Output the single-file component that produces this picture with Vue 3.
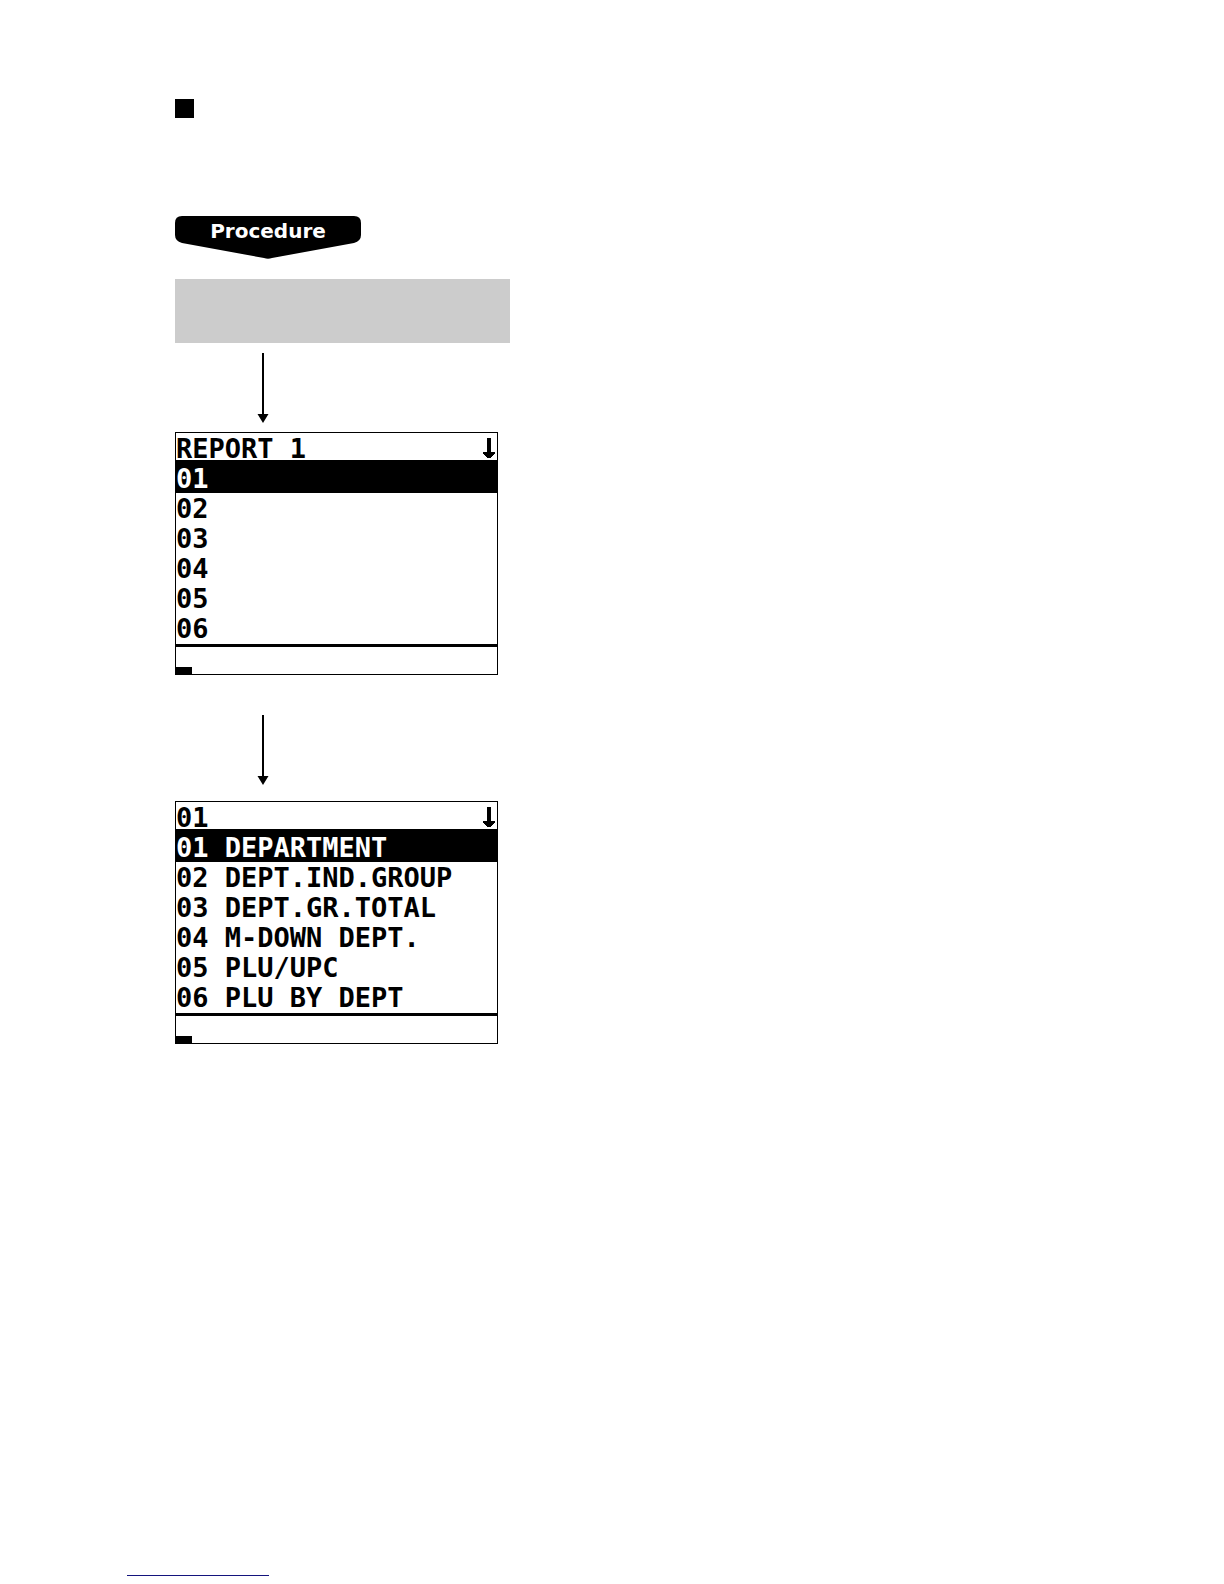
<template>
  <main class="page">
    <div class="marker"></div>

    <h2 class="procedure">
      <svg class="procedure-shape" viewBox="0 0 186 43" aria-hidden="true">
        <path d="M7 0H179Q186 0 186 7V19Q186 25 179 27L97 42Q93 43.500 89 42L7 27Q0 25 0 19V7Q0 0 7 0Z" />
      </svg>
      <span class="procedure-label">Procedure</span>
    </h2>

    <div class="mode-box"></div>

    <template v-for="screen in screens" :key="screen.id">
      <svg class="flow-arrow" :class="screen.id" viewBox="0 0 12 70" aria-hidden="true">
        <path d="M5 0H7V61H11.500L6 70L0.500 61H5Z" />
      </svg>

      <section class="screen">
        <header class="screen-title">
          <span>{{ screen.title }}</span>
          <svg class="scroll-arrow" viewBox="0 0 12 20" aria-hidden="true">
            <path d="M4 0H8V14H12V16H11V17H10V18H9V19H8V20H4V19H3V18H2V17H1V16H0V14H4Z" />
          </svg>
        </header>
        <ul class="screen-list">
          <li v-for="(item, index) in screen.items" :key="item" :class="{ selected: index === 0 }">{{ item }}</li>
        </ul>
        <div class="screen-entry">
          <span class="cursor"></span>
        </div>
      </section>
    </template>

    <footer class="footer">
      <div class="footer-line"></div>
    </footer>
  </main>
</template>

<script setup>
const screens = [
  {
    id: 'first',
    title: 'REPORT 1',
    items: ['01', '02', '03', '04', '05', '06']
  },
  {
    id: 'second',
    title: '01',
    items: [
      '01 DEPARTMENT',
      '02 DEPT.IND.GROUP',
      '03 DEPT.GR.TOTAL',
      '04 M-DOWN DEPT.',
      '05 PLU/UPC',
      '06 PLU BY DEPT'
    ]
  }
]
</script>

<style>
body {
  margin: 0;
  background: #fff;
}
</style>

<style scoped>
.page {
  display: flex;
  flex-direction: column;
  align-items: flex-start;
  box-sizing: border-box;
  min-height: 100vh;
  padding: 99px 127px 8px 175px;
  color: #000;
}

.marker {
  width: 19px;
  height: 19px;
  background: #000;
}

.procedure {
  display: grid;
  width: 186px;
  margin: 98px 0 20px;
  color: #fff;
  font: bold 20px/30px "DejaVu Sans", sans-serif;
  text-align: center;
}

.procedure-shape,
.procedure-label {
  grid-area: 1 / 1;
}

.procedure-shape {
  display: block;
  width: 100%;
  fill: #000;
}

.mode-box {
  width: 100%;
  max-width: 335px;
  height: 64px;
  background: #ccc;
}

.flow-arrow {
  width: 12px;
  height: 70px;
  margin: 10px 0 9px 82px;
}

.flow-arrow.second {
  margin: 40px 0 16px 82px;
}

.screen {
  box-sizing: border-box;
  width: 100%;
  max-width: 323px;
  border: 1px solid #000;
  font: bold 27px/32px "DejaVu Sans Mono", monospace;
  white-space: pre;
}

.screen-title {
  display: flex;
  justify-content: space-between;
  height: 27px;
}

.scroll-arrow {
  width: 12px;
  height: 20px;
  margin: 5px 2px 0 0;
}

.screen-list {
  margin: 0;
  padding: 0 0 1px;
  list-style: none;
}

.screen-list li {
  height: 30px;
}

.screen-list .selected {
  padding-top: 3px;
  background: #000;
  color: #fff;
}

.screen-entry {
  display: flex;
  align-items: flex-end;
  height: 27px;
  border-top: 3px solid #000;
}

.cursor {
  width: 16px;
  height: 7px;
  background: #000;
}

.footer {
  margin: auto 0 0 -48px;
}

.footer-line {
  width: 142px;
  height: 1px;
  background: #14147d;
}
</style>
